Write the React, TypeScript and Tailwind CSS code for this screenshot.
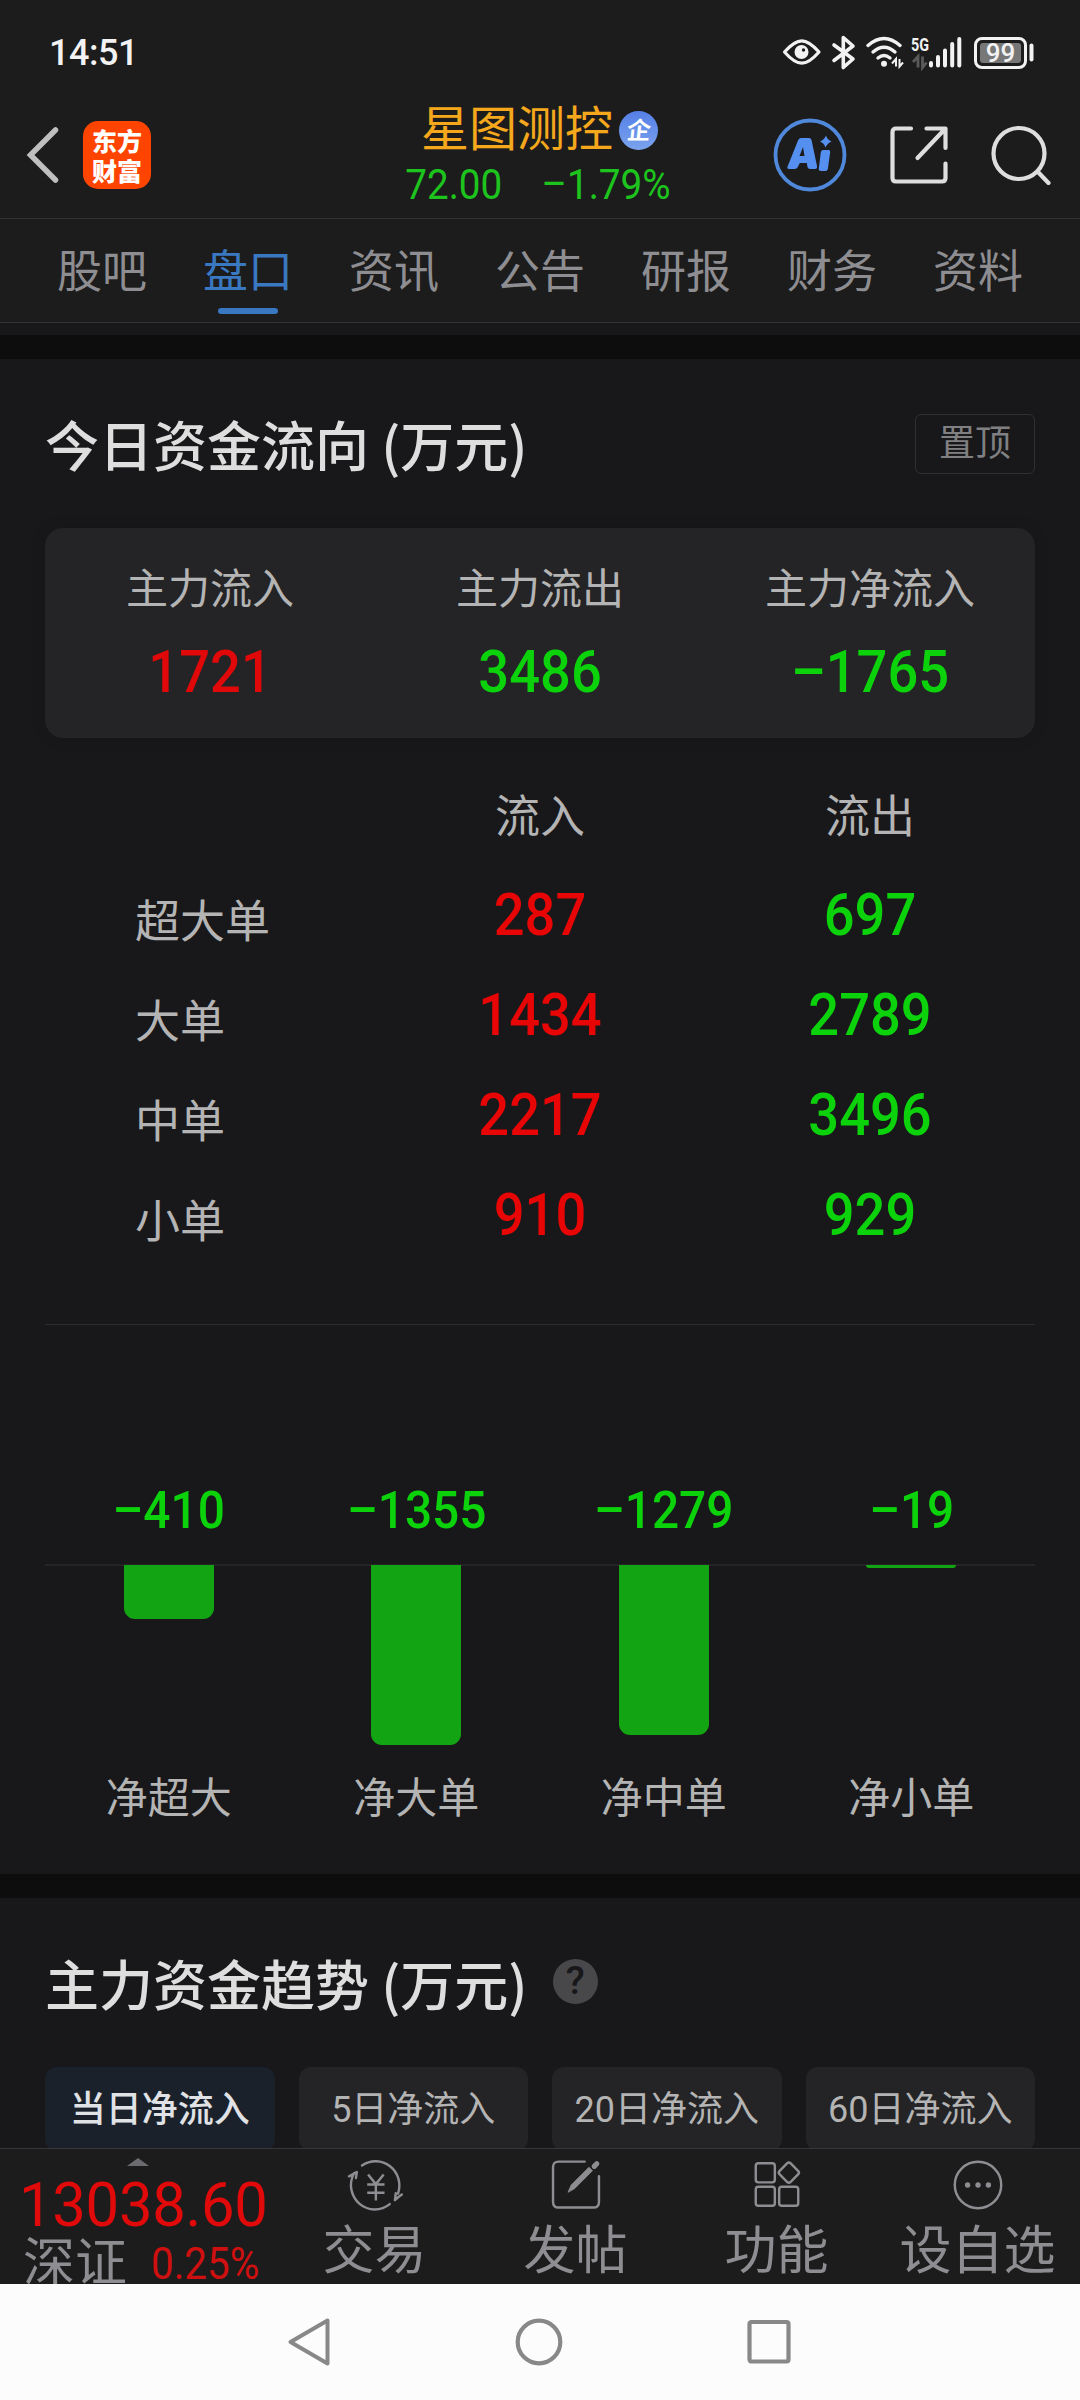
import type { ReactNode } from "react";
import clsx from "clsx";

const TABS = ["股吧", "盘口", "资讯", "公告", "研报", "财务", "资料"];
const ACTIVE_TAB = "盘口";

const SUMMARY = [
  { label: "主力流入", value: "1721", up: true },
  { label: "主力流出", value: "3486", up: false },
  { label: "主力净流入", value: "-1765", up: false },
];

const ORDERS = [
  { label: "超大单", inflow: "287", outflow: "697" },
  { label: "大单", inflow: "1434", outflow: "2789" },
  { label: "中单", inflow: "2217", outflow: "3496" },
  { label: "小单", inflow: "910", outflow: "929" },
];

const NET_FLOW = [
  { label: "净超大", value: -410 },
  { label: "净大单", value: -1355 },
  { label: "净中单", value: -1279 },
  { label: "净小单", value: -19 },
];

const PERIODS = ["当日净流入", "5日净流入", "20日净流入", "60日净流入"];

const MAX_BAR = 180;
const maxNet = Math.max(...NET_FLOW.map((n) => Math.abs(n.value)));

function Num({ children, className }: { children: ReactNode; className?: string }) {
  return <span className={clsx("inline-block scale-x-92 whitespace-pre", className)}>{children}</span>;
}

// Numbers use a short, heavy dash instead of a hyphen
function Signed({ value }: { value: string }) {
  return <>{value.replace("-", "–")}</>;
}

function StatusBar() {
  return (
    <div className="flex h-[97px] items-center justify-between pt-[9px] pr-[45px] pl-[49px] text-[#f2f2f2]">
      <span className="text-[36px] leading-none font-medium tracking-[-0.5px]">14:51</span>
      <svg width="253" height="36" viewBox="782 35 253 36" fill="none" stroke="currentColor">
        <path d="M784.5 52c7-8 12-11.200 17.300-11.200S812 44 819 52c-7 8-12 11.200-17.200 11.200S791.500 60 784.500 52z" strokeWidth="3.200" strokeLinejoin="round" />
        <circle cx="801.500" cy="52" r="7" fill="currentColor" stroke="none" />
        <circle cx="803.500" cy="50" r="1.700" fill="#1c1c1c" stroke="none" />
        <path d="M834 45l19 14-9.700 8.500V37.500L853 46l-19 14.500" strokeWidth="3.600" strokeLinejoin="round" strokeLinecap="round" />
        <g strokeWidth="3.400" strokeLinecap="round">
          <path d="M868 45.500q16-14 32 0" />
          <path d="M873 52q11-9.500 22 0" />
          <path d="M878 58q6-5 12 0" />
        </g>
        <circle cx="884" cy="63.800" r="3" fill="currentColor" stroke="none" />
        <path d="M892 63.500l4-4.500v7.500M899.500 59v7.500l3.500-4" strokeWidth="2" />
        <path d="M913 62l5-5.500v11M922.500 56.500v11l4-5" stroke="#5a5a5a" strokeWidth="2.800" />
        <text x="911" y="51" fontSize="18.500" fontWeight="700" fill="currentColor" stroke="none" textLength="18" lengthAdjust="spacingAndGlyphs">5G</text>
        <g strokeWidth="4" strokeLinecap="round">
          <path d="M931 63v2.500M938 57v8.500M945 50.500v15M952.200 44v21.500M959.300 39v26.500" />
        </g>
        <rect x="975.500" y="38.500" width="50" height="29" rx="6.500" strokeWidth="3" />
        <rect x="980" y="43" width="41" height="20" rx="3" fill="#777" stroke="none" />
        <path d="M1031.500 45.500v14" strokeWidth="4" strokeLinecap="round" />
        <text x="1000.500" y="61.500" fontSize="26" fontWeight="500" textAnchor="middle" fill="currentColor" stroke="none">99</text>
      </svg>
    </div>
  );
}

function Header() {
  return (
    <header className="grid h-[122px] grid-cols-[1fr_auto_1fr] border-b border-[#333] pr-[29px] pb-[12px] pl-[26px]">
      <div className="flex items-center gap-[24px]">
        <svg width="33" height="58" viewBox="0 0 33 58" fill="none" stroke="#bfbfbf" strokeWidth="5.500" strokeLinecap="round" strokeLinejoin="miter">
          <path d="M29.500 4L4.500 29l25 25" />
        </svg>
        <div className="flex size-[68px] flex-col items-center justify-center rounded-[15px] bg-[#ff4400] font-['Noto_Sans_CJK_SC',sans-serif] text-[25px] leading-[30px] font-black text-white">
          <span>东方</span>
          <span>财富</span>
        </div>
      </div>

      <div className="flex flex-col items-center pt-[5px]">
        <div className="flex items-center gap-[6px] pl-[2px]">
          <span className="text-[48px] leading-[56px] text-[#f5a81c]">星图测控</span>
          <span className="flex size-[39px] items-center justify-center rounded-full bg-linear-to-b from-[#557fe6] to-[#7ba3ee] font-['Noto_Sans_CJK_SC',sans-serif] text-[24px] leading-none font-bold text-white">
            <span className="-mt-[3px] -skew-x-6">企</span>
          </span>
        </div>
        <div className="flex gap-[29px] text-[42px] leading-[54px] text-[#1ec41e]">
          <Num>72.00</Num>
          <Num><Signed value="-1.79%" /></Num>
        </div>
      </div>

      <div className="flex items-center justify-end gap-[42px]">
        <svg width="74" height="74" viewBox="0 0 74 74">
          <circle cx="37" cy="37" r="34.500" fill="none" stroke="#5088dc" strokeWidth="3.800" />
          <path d="M27 20h9q2 0 2.500 2l5.500 26q.5 3-2 3h-5q-2 0-2.500-2l-.7-4h-7l-2 4q-1 2-3 2h-5.500q-3 0-1.500-3l10-25q1-3 3.200-3zM30 29l-3.500 9h5z" fill="#5590f0" fillRule="evenodd" />
          <path d="M50 32h5.500q2 0 1.700 2L55 50q-.3 3-2.500 3H48q-2.500 0-2.200-2.500l2-16q.3-2.500 2.200-2.500z" fill="#5590f0" />
          <path d="M53 17.500q1.500 4.500 5.500 6-4 1.500-6 6-1.500-4.500-5.500-6 4-1.500 6-6z" fill="#5590f0" />
        </svg>
        <svg width="60" height="60" viewBox="0 0 60 60" fill="none" stroke="#dedede" strokeWidth="4.200" strokeLinecap="round" strokeLinejoin="round">
          <path d="M22 3.500H7q-3.500 0-3.500 3.500v46q0 3.500 3.500 3.500h46q3.500 0 3.500-3.500V38.500" />
          <path d="M37.500 3.500h19V23M56 4L28.500 33" />
        </svg>
        <svg width="60" height="60" viewBox="0 0 60 60" fill="none" stroke="#dedede" strokeWidth="4.200" strokeLinecap="round">
          <circle cx="28" cy="28.500" r="25.500" />
          <path d="M47 47l10.500 11" />
        </svg>
      </div>
    </header>
  );
}

function Tabs() {
  return (
    <nav className="flex h-[104px] border-b border-[#333] px-[29px]">
      {TABS.map((tab) => (
        <div key={tab} className="flex flex-1 flex-col items-center pt-[23px]">
          <span className={clsx("text-[45px] leading-[62px]", tab === ACTIVE_TAB ? "text-[#3a78c2]" : "text-[#8e8e92]")}>{tab}</span>
          {tab === ACTIVE_TAB && <span className="mt-[4px] h-[6px] w-[60px] rounded-full bg-[#3a78c2]" />}
        </div>
      ))}
    </nav>
  );
}

function MoneyFlow() {
  return (
    <section className="px-[45px]">
      <div className="flex h-[169px] items-center justify-between">
        <h2 className="font-['Noto_Sans_CJK_SC',sans-serif] text-[54px] leading-none font-medium text-[#dedede]">今日资金流向 (万元)</h2>
        <button className="h-[60px] w-[120px] rounded-[6px] border border-[#303032] text-[36px] leading-none text-[#808082]">置顶</button>
      </div>

      <div className="grid h-[210px] grid-cols-3 rounded-[18px] bg-[#242426] pt-[30px] text-center shadow-[0_0_16px_rgba(0,0,0,0.12)]">
        {SUMMARY.map((item) => (
          <div key={item.label} className="flex flex-col items-center">
            <span className="text-[42px] leading-[64px] text-[#b4b4b4]">{item.label}</span>
            <Num className={clsx("mt-[14px] text-[59px] leading-[72px] font-medium", item.up ? "text-[#e00808]" : "text-[#0cd20c]")}>
              <Signed value={item.value} />
            </Num>
          </div>
        ))}
      </div>

      <div className="grid grid-cols-3 pt-[28px] text-center">
        <span />
        <span className="text-[45px] leading-[104px] text-[#b4b4b4]">流入</span>
        <span className="text-[45px] leading-[104px] text-[#b4b4b4]">流出</span>
      </div>
      {ORDERS.map((row) => (
        <div key={row.label} className="grid h-[100px] grid-cols-3 items-center text-center">
          <span className="pt-[4px] pl-[90px] text-left text-[45px] leading-none text-[#b4b4b4]">{row.label}</span>
          <Num className="-mt-[12px] text-[59px] leading-none font-medium text-[#e80505]">{row.inflow}</Num>
          <Num className="-mt-[12px] text-[59px] leading-none font-medium text-[#0cd20c]">{row.outflow}</Num>
        </div>
      ))}

      <div className="mt-[54px] h-px bg-[#2c2c2e]" />

      <div className="grid grid-cols-4 pt-[150px] text-center">
        {NET_FLOW.map((item) => (
          <Num key={item.label} className="h-[89px] text-[52px] leading-[72px] font-medium text-[#0cd20c]">
            <Signed value={String(item.value)} />
          </Num>
        ))}
      </div>
      <div className="grid h-[194px] grid-cols-4 justify-items-center border-t-2 border-[#242426]">
        {NET_FLOW.map((item) => (
          <div
            key={item.label}
            className="-mt-px w-[90px] rounded-b-[11px] bg-[#12a412]"
            style={{ height: Math.max(2.5, (Math.abs(item.value) / maxNet) * MAX_BAR) }}
          />
        ))}
      </div>
      <div className="grid h-[116px] grid-cols-4 pt-[10px] text-center">
        {NET_FLOW.map((item) => (
          <span key={item.label} className="text-[42px] leading-[62px] text-[#b4b4b4]">{item.label}</span>
        ))}
      </div>
    </section>
  );
}

function FlowTrend() {
  return (
    <section className="h-[250px] overflow-hidden px-[45px]">
      <div className="flex h-[169px] items-center gap-[25px]">
        <h2 className="font-['Noto_Sans_CJK_SC',sans-serif] text-[54px] leading-none font-medium text-[#dedede]">主力资金趋势 (万元)</h2>
        <span className="-mt-[3px] flex size-[45px] items-center justify-center rounded-full bg-[#48484b] text-[39px] leading-none font-medium text-[#18181a]">?</span>
      </div>
      <div className="grid grid-cols-4 gap-[24px]">
        {PERIODS.map((period, i) => (
          <div
            key={period}
            className={clsx(
              "h-[84px] rounded-[12px] text-center text-[36px] leading-[86px]",
              i === 0 ? "bg-[#1a212b] font-medium text-[#e0e2e6]" : "bg-[#242426] text-[#b4b4b4]"
            )}
          >
            {period}
          </div>
        ))}
      </div>
    </section>
  );
}

function BarItem({ label, children }: { label: string; children: ReactNode }) {
  return (
    <div className="flex w-[201px] flex-col items-center">
      <svg width="66" height="60" viewBox="0 0 66 60" fill="none" stroke="#8e8e92" strokeWidth="2.800" strokeLinecap="round" strokeLinejoin="round">
        {children}
      </svg>
      <span className="mt-[9px] text-[52px] leading-[64px]">{label}</span>
    </div>
  );
}

function BottomBar() {
  return (
    <div className="flex h-[136px] overflow-hidden border-t border-[#363638] bg-[#1c1c1c] text-[#8e8e92]">
      <div className="w-[274px] shrink-0 pt-[9px] pl-[19px]">
        <svg className="ml-[108px]" width="22" height="8" viewBox="0 0 22 8"><path d="M0 8L11 0l11 8z" fill="#6c6c70" /></svg>
        <div className="-mt-[1px] origin-left scale-x-98 text-[61px] leading-[80px] tracking-[-0.3px] text-[#e10a0a]">13038.60</div>
        <div className="-mt-[11px] flex items-center pl-[4px]">
          <span className="text-[52px] leading-[60px]">深证</span>
          <Num className="origin-left pl-[26px] text-[44px] leading-[60px] text-[#cf1010]">0.25%</Num>
        </div>
      </div>
      <div className="flex pt-[10px]">
        <BarItem label="交易">
          <path d="M18 7.500A27.500 28 0 0 1 59.500 40M59.500 44.500L56 47.500l1-8M64 41l-5.500 4" />
          <path d="M50 52A27.500 28 0 0 1 8.500 17M8.500 16.500l3.500-1.500-1 7M3 20l8-4.500" />
          <path d="M25 18l9 11 9-11M34 29v19M24 29.500h20M24 39h20" strokeLinecap="butt" />
        </BarItem>
        <BarItem label="发帖">
          <path d="M43 3H13Q6.500 3 6.500 9.500v40q0 6.500 6.500 6.500h40q6.500 0 6.500-6.500V20" />
          <path d="M24 38l3.500-8L48 9.500l4 4-20.500 20.500z" fill="#8e8e92" strokeWidth="1" />
          <path d="M54 8.500l3-3" strokeWidth="6" />
        </BarItem>
        <BarItem label="功能">
          <rect x="8.500" y="5" width="22" height="22" rx="3" />
          <rect x="8.500" y="32" width="22" height="22" rx="3" />
          <rect x="35.500" y="32" width="22" height="22" rx="3" />
          <rect x="37.700" y="6.700" width="18" height="18" rx="3" transform="rotate(45 46.700 15.700)" />
        </BarItem>
        <BarItem label="设自选">
          <circle cx="33" cy="30" r="26.800" />
          <g fill="#8e8e92" stroke="none">
            <circle cx="21" cy="30" r="3.100" />
            <circle cx="33" cy="30" r="3.100" />
            <circle cx="45" cy="30" r="3.100" />
          </g>
        </BarItem>
      </div>
    </div>
  );
}

function SystemNav() {
  return (
    <div className="flex h-[116px] items-center justify-between bg-[#fcfcfc] pr-[287px] pl-[285px]">
      <svg width="48" height="50" viewBox="0 0 48 50" fill="none" stroke="#888" strokeWidth="4" strokeLinejoin="round">
        <path d="M42.500 3.500v43L5.500 25z" />
      </svg>
      <svg width="50" height="50" viewBox="0 0 50 50" fill="none" stroke="#888" strokeWidth="4.200">
        <circle cx="25" cy="25" r="21.300" />
      </svg>
      <svg width="48" height="50" viewBox="0 0 48 50" fill="none" stroke="#888" strokeWidth="4.200">
        <rect x="4.500" y="5" width="39" height="39.500" rx="2" />
      </svg>
    </div>
  );
}

export default function App() {
  return (
    <div className="h-[2400px] w-[1080px] overflow-hidden bg-[#18181a] font-['Roboto','Noto_Sans_CJK_SC',sans-serif]">
      <div className="bg-[#1c1c1c]">
        <StatusBar />
        <Header />
        <Tabs />
      </div>
      <div className="mt-[12px] h-[24px] bg-[#0d0d0d]" />
      <MoneyFlow />
      <div className="h-[24px] bg-[#0d0d0d]" />
      <FlowTrend />
      <BottomBar />
      <SystemNav />
    </div>
  );
}
